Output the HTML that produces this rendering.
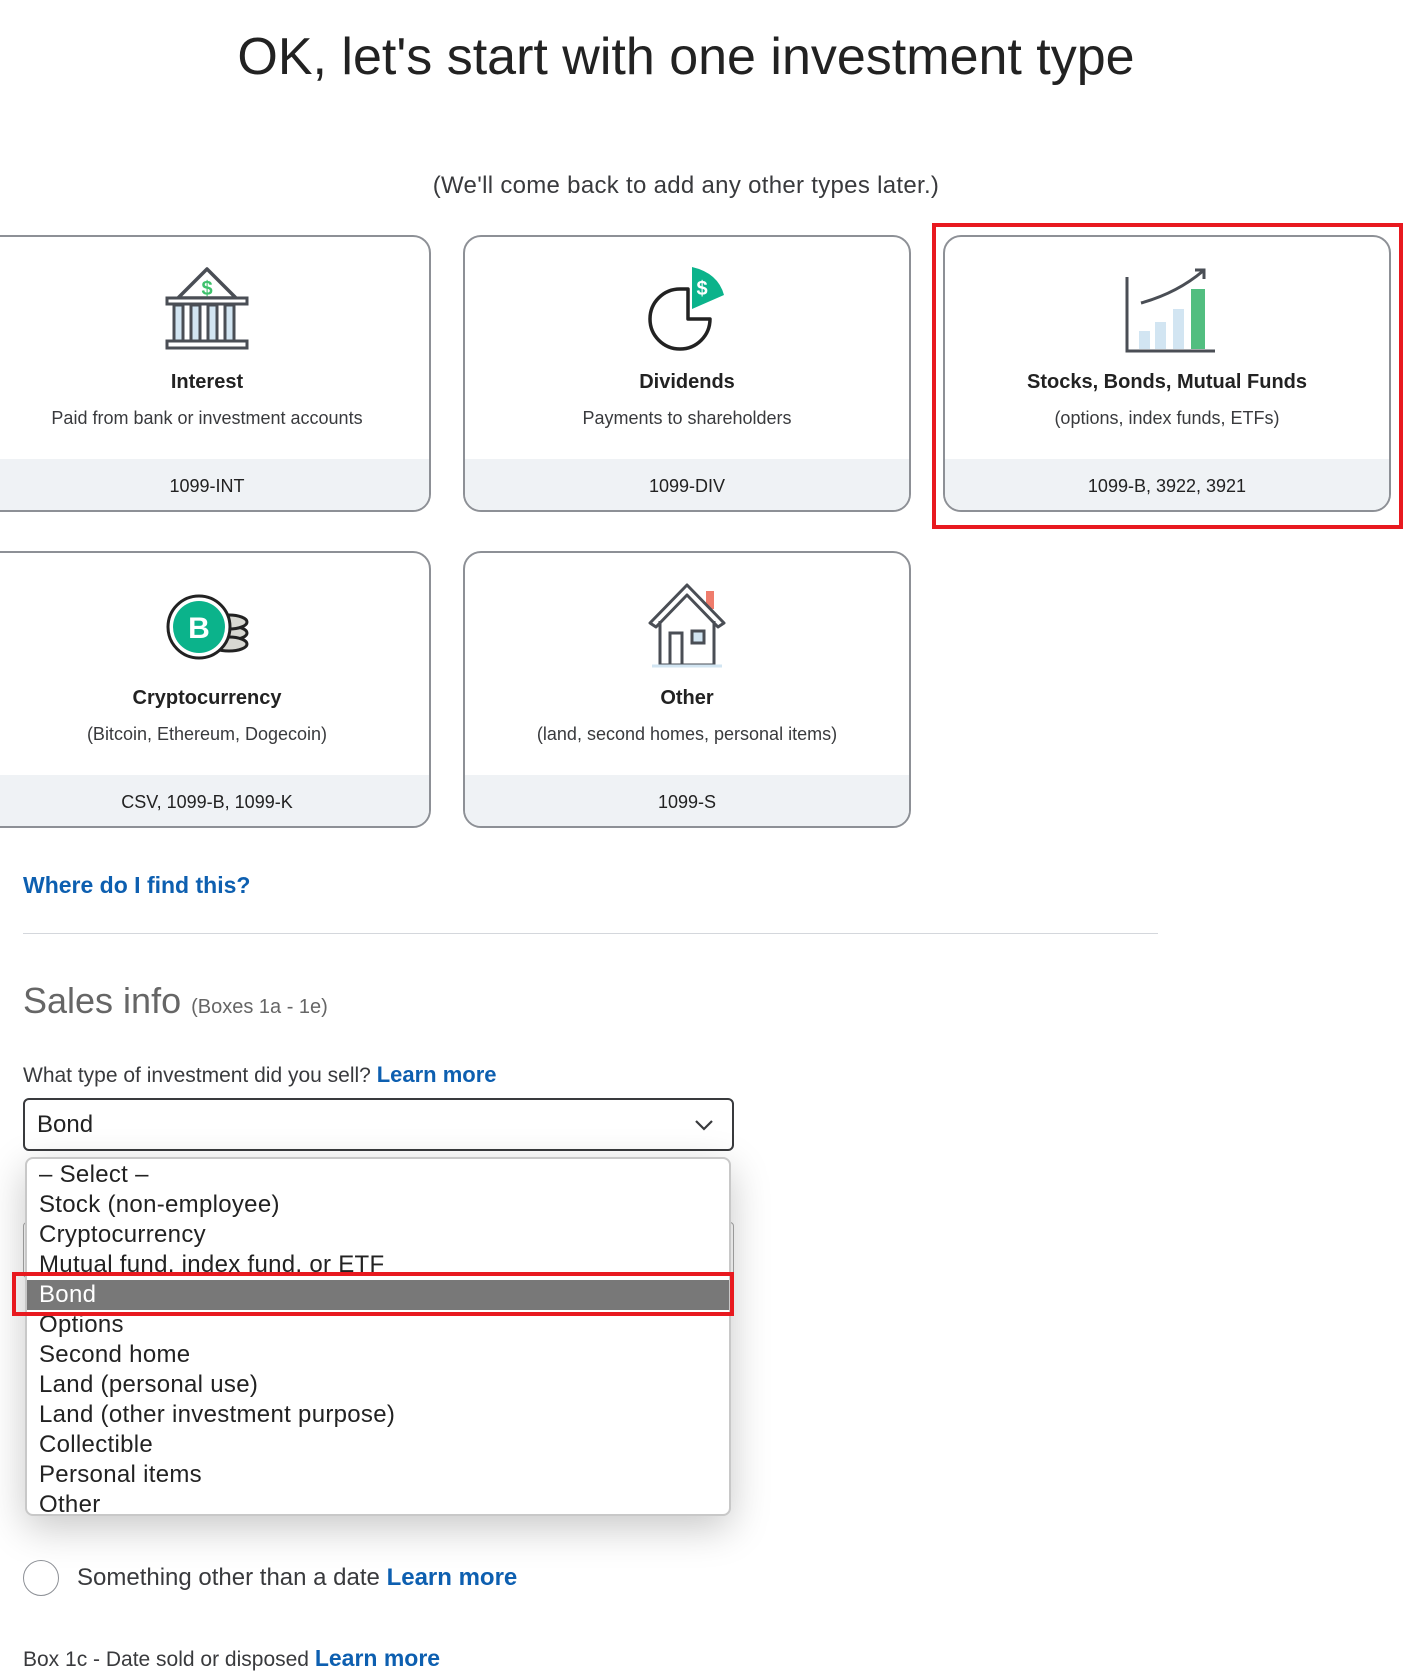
<!DOCTYPE html>
<html><head><meta charset="utf-8"><style>
*{box-sizing:border-box;margin:0;padding:0}
body{width:1412px;height:1670px;overflow:hidden;background:#fff;font-family:"Liberation Sans",sans-serif;color:#393a3d;position:relative}
.abs{position:absolute}
h1{position:absolute;top:27px;left:0;width:1372px;text-align:center;font-weight:300;font-size:52px;color:#222}
.sub{position:absolute;top:172px;left:0;width:1372px;text-align:center;font-size:24px;color:#393a3d;letter-spacing:0.3px}
.card{position:absolute;width:448px;height:277px;border:2px solid #8d9096;border-radius:18px;overflow:hidden;background:#fff}
.card .t{position:absolute;top:134px;width:100%;text-align:center;font-size:20px;font-weight:bold;color:#222}
.card .d{position:absolute;top:171px;width:100%;text-align:center;font-size:18px;color:#393a3d}
.card .f{position:absolute;bottom:0;height:51px;width:100%;background:#eff2f5;text-align:center;line-height:54px;font-size:18px;color:#222}
.card svg{position:absolute;left:50%;top:28px;transform:translateX(-50%)}
a{color:#0d5fb0;font-weight:bold;text-decoration:none}
</style></head><body>
<h1>OK, let's start with one investment type</h1>
<div class="sub">(We'll come back to add any other types later.)</div>

<div class="card" style="left:-17px;top:235px">
<svg width="90" height="90" viewBox="0 0 90 90"><path d="M45 4 L16 33 H74 Z" fill="none" stroke="#4a4e55" stroke-width="3.5" stroke-linejoin="round"/><text x="45" y="30" text-anchor="middle" font-size="20" font-weight="bold" fill="#3ec16c" font-family="Liberation Sans">$</text><rect x="5" y="33" width="80" height="6" fill="#fff" stroke="#4a4e55" stroke-width="3"/><rect x="12" y="40" width="9" height="36" fill="#d2e5f2" stroke="#4a4e55" stroke-width="3"/><rect x="29" y="40" width="9" height="36" fill="#d2e5f2" stroke="#4a4e55" stroke-width="3"/><rect x="46" y="40" width="9" height="36" fill="#d2e5f2" stroke="#4a4e55" stroke-width="3"/><rect x="63" y="40" width="9" height="36" fill="#d2e5f2" stroke="#4a4e55" stroke-width="3"/><rect x="5" y="76" width="80" height="7" fill="#fff" stroke="#4a4e55" stroke-width="3"/></svg>
<div class="t">Interest</div><div class="d">Paid from bank or investment accounts</div><div class="f">1099-INT</div></div>

<div class="card" style="left:463px;top:235px">
<svg width="90" height="90" viewBox="0 0 90 90"><path d="M38 24 A30 30 0 1 0 68 54 L46 54 L46 24 Z" fill="none" stroke="#222" stroke-width="3.5" stroke-linejoin="round"/><path d="M50 2 L50 44 L82 30 Q76 8 50 2 Z" fill="#0bb38b"/><text x="60" y="30" text-anchor="middle" font-size="20" font-weight="bold" fill="#fff" font-family="Liberation Sans">$</text></svg>
<div class="t">Dividends</div><div class="d">Payments to shareholders</div><div class="f">1099-DIV</div></div>

<div class="card" style="left:943px;top:235px">
<svg width="100" height="90" viewBox="0 0 100 90"><path d="M10 12 V86 H98" fill="none" stroke="#4a4e55" stroke-width="3"/><rect x="22" y="66" width="11" height="18" fill="#d2e5f2"/><rect x="38" y="57" width="11" height="27" fill="#d2e5f2"/><rect x="56" y="44" width="11" height="40" fill="#d2e5f2"/><rect x="74" y="24" width="14" height="60" fill="#52be80"/><path d="M24 38 Q60 28 86 6" fill="none" stroke="#4a4e55" stroke-width="3"/><path d="M78 5 L87 5 L87 14" fill="none" stroke="#4a4e55" stroke-width="3"/></svg>
<div class="t">Stocks, Bonds, Mutual Funds</div><div class="d">(options, index funds, ETFs)</div><div class="f">1099-B, 3922, 3921</div></div>
<div class="abs" style="left:932px;top:223px;width:471px;height:306px;border:4px solid #e8191f"></div>

<div class="card" style="left:-17px;top:551px">
<svg width="100" height="90" viewBox="0 0 100 90"><ellipse cx="72" cy="52" rx="18" ry="7" fill="#d8d8d2" stroke="#222" stroke-width="3"/><ellipse cx="72" cy="63" rx="18" ry="7" fill="#d8d8d2" stroke="#222" stroke-width="3"/><ellipse cx="72" cy="41" rx="18" ry="7" fill="#d8d8d2" stroke="#222" stroke-width="3"/><circle cx="42" cy="46" r="31" fill="#fff" stroke="#222" stroke-width="3"/><circle cx="42" cy="46" r="26" fill="#0bb38b"/><text x="42" y="57" text-anchor="middle" font-size="30" font-weight="bold" fill="#fff" font-family="Liberation Sans">B</text></svg>
<div class="t">Cryptocurrency</div><div class="d">(Bitcoin, Ethereum, Dogecoin)</div><div class="f">CSV, 1099-B, 1099-K</div></div>

<div class="card" style="left:463px;top:551px">
<svg width="90" height="90" viewBox="0 0 90 90"><rect x="64" y="10" width="8" height="18" fill="#ef7c6c"/><path d="M8 42 L45 4 L82 42 L76 46 L45 14 L14 46 Z" fill="#fff" stroke="#4a4e55" stroke-width="3" stroke-linejoin="round"/><path d="M18 40 V84 H72 V40" fill="none" stroke="#4a4e55" stroke-width="3"/><rect x="28" y="52" width="12" height="32" fill="none" stroke="#4a4e55" stroke-width="3"/><rect x="50" y="50" width="12" height="12" fill="#d2e5f2" stroke="#4a4e55" stroke-width="3"/><path d="M10 85 H80" stroke="#d2e5f2" stroke-width="3"/></svg>
<div class="t">Other</div><div class="d">(land, second homes, personal items)</div><div class="f">1099-S</div></div>

<div class="abs" style="left:23px;top:872px;font-size:23px"><a>Where do I find this?</a></div>
<div class="abs" style="left:23px;top:933px;width:1135px;height:1px;background:#d4d7dc"></div>
<div class="abs" style="left:23px;top:980px;font-size:36px;color:#666;font-weight:300">Sales info <span style="font-size:20px">(Boxes 1a - 1e)</span></div>
<div class="abs" style="left:23px;top:1062px;font-size:21px">What type of investment did you sell? <a style="font-size:22px">Learn more</a></div>
<div class="abs" style="left:23px;top:1098px;width:711px;height:53px;border:2px solid #393a3d;border-radius:6px;font-size:24px;line-height:49px;padding-left:12px;color:#222">Bond
<svg class="abs" style="right:18px;top:18px" width="20" height="14" viewBox="0 0 20 14"><path d="M2 3 L10 11 L18 3" fill="none" stroke="#393a3d" stroke-width="2.2"/></svg></div>

<div class="abs" style="left:23px;top:1222px;width:711px;height:56px;border:1px solid #aaa;border-radius:4px"></div>

<div class="abs" style="left:25px;top:1157px;width:706px;height:359px;border:2px solid #c8c8c8;border-radius:8px;background:#fff;box-shadow:0 12px 40px rgba(0,0,0,.22);font-size:24px;line-height:30px;color:#222;padding-top:1px;overflow:hidden;letter-spacing:0.3px">
<div style="padding-left:12px">– Select –</div>
<div style="padding-left:12px">Stock (non-employee)</div>
<div style="padding-left:12px">Cryptocurrency</div>
<div style="padding-left:12px">Mutual fund, index fund, or ETF</div>
<div style="padding-left:12px;background:#787878;color:#fff">Bond</div>
<div style="padding-left:12px">Options</div>
<div style="padding-left:12px">Second home</div>
<div style="padding-left:12px">Land (personal use)</div>
<div style="padding-left:12px">Land (other investment purpose)</div>
<div style="padding-left:12px">Collectible</div>
<div style="padding-left:12px">Personal items</div>
<div style="padding-left:12px">Other</div>
</div>
<div class="abs" style="left:12px;top:1272px;width:722px;height:44px;border:4px solid #e8191f"></div>

<div class="abs" style="left:23px;top:1560px;width:36px;height:36px;border:1.5px solid #8d9096;border-radius:50%"></div>
<div class="abs" style="left:77px;top:1564px;font-size:24px;color:#393a3d">Something other than a date <a>Learn more</a></div>
<div class="abs" style="left:23px;top:1645px;font-size:21px">Box 1c - Date sold or disposed <a style="font-size:23px">Learn more</a></div>
</body></html>
